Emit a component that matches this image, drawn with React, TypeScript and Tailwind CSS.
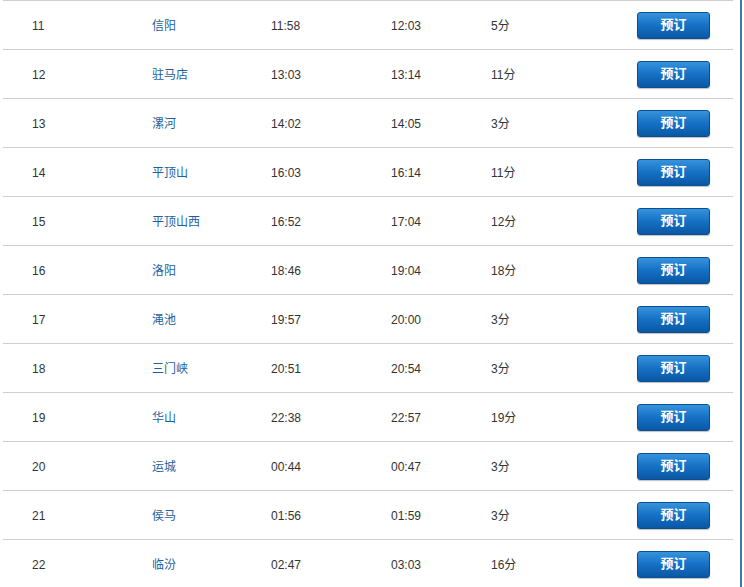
const rows = [
	{ no: '11', station: '信阳', arrive: '11:58', depart: '12:03', stay: '5分' },
	{ no: '12', station: '驻马店', arrive: '13:03', depart: '13:14', stay: '11分' },
	{ no: '13', station: '漯河', arrive: '14:02', depart: '14:05', stay: '3分' },
	{ no: '14', station: '平顶山', arrive: '16:03', depart: '16:14', stay: '11分' },
	{ no: '15', station: '平顶山西', arrive: '16:52', depart: '17:04', stay: '12分' },
	{ no: '16', station: '洛阳', arrive: '18:46', depart: '19:04', stay: '18分' },
	{ no: '17', station: '渑池', arrive: '19:57', depart: '20:00', stay: '3分' },
	{ no: '18', station: '三门峡', arrive: '20:51', depart: '20:54', stay: '3分' },
	{ no: '19', station: '华山', arrive: '22:38', depart: '22:57', stay: '19分' },
	{ no: '20', station: '运城', arrive: '00:44', depart: '00:47', stay: '3分' },
	{ no: '21', station: '侯马', arrive: '01:56', depart: '01:59', stay: '3分' },
	{ no: '22', station: '临汾', arrive: '02:47', depart: '03:03', stay: '16分' }
]

const BookButton = () => (
	<button className="flex h-[27px] w-[73px] items-center justify-center rounded-[3px] border border-[#0b4f92] bg-gradient-to-b from-[#3593dc] via-[#1570c4] to-[#0a58a5] text-[13px] font-bold text-white shadow-[0_1px_1px_rgba(0,0,0,0.25)]">
		预订
	</button>
)

export default function App() {
	return (
		<div className="flex h-[587px] w-[744px] overflow-hidden bg-white font-['Liberation_Sans','Noto_Sans_CJK_SC',sans-serif] text-[12px]">
			<div className="ml-[3px] w-[730px] border-t border-[#cfcfcf]">
				{rows.map((r) => (
					<div
						key={r.no}
						className="flex h-[49px] shrink-0 items-center border-b border-[#cfcfcf]"
					>
						<div className="w-[149px] pt-[2px] pl-[29px] text-[#333]">{r.no}</div>
						<div className="w-[119px] pt-[2px] text-[#1d5f9f]">{r.station}</div>
						<div className="w-[120px] pt-[2px] text-[#333]">{r.arrive}</div>
						<div className="w-[100px] pt-[2px] text-[#333]">{r.depart}</div>
						<div className="w-[146px] pt-[2px] text-[#333]">{r.stay}</div>
						<BookButton />
					</div>
				))}
			</div>
			<div className="ml-[7px] w-[2px] bg-[#3e78b2]" />
		</div>
	)
}
